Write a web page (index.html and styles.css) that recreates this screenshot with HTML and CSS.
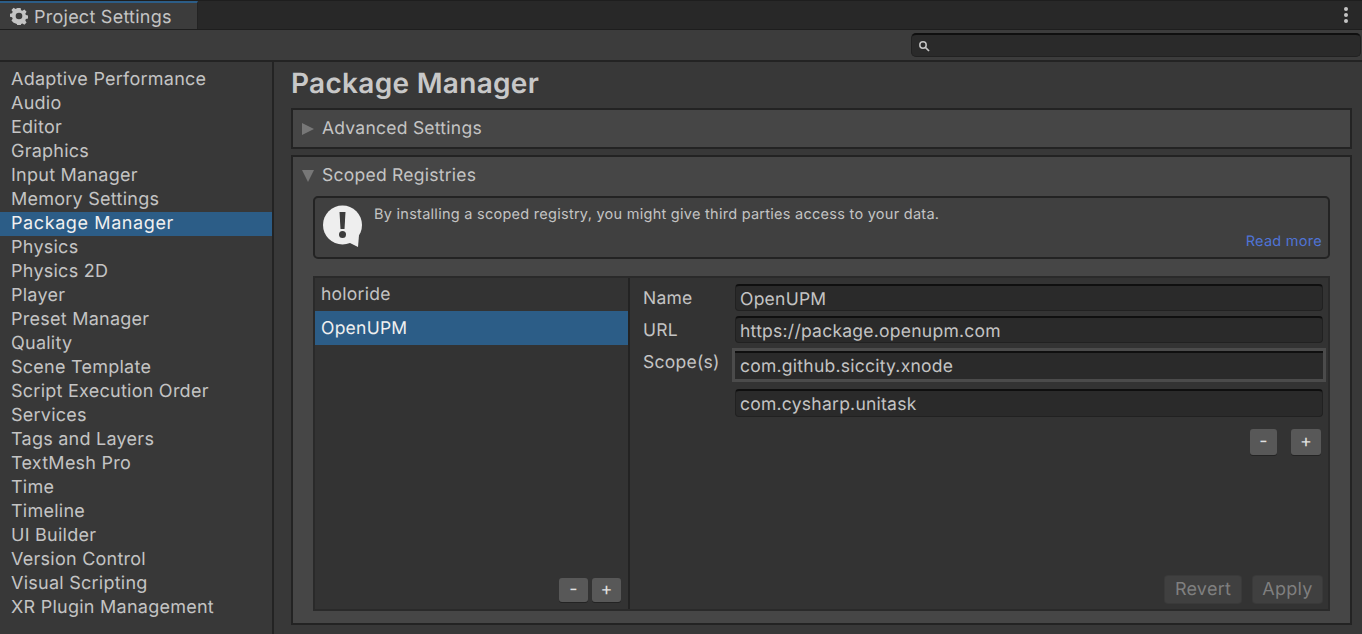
FILE: index.html
```html
<!DOCTYPE html>
<html lang="en">
<head>
  <meta charset="UTF-8" />
  <title>Project Settings</title>
  <link rel="stylesheet" href="styles.css">
</head>
<body>
  <div class="tabbar">
    <div class="tab">
      <svg class="gear" width="18" height="18" viewBox="0 0 20 20">
        <path fill="#c4c4c4" fill-rule="evenodd" d="M8.2 1h3.6l.5 2.5 1.5.7 2.2-1.4 2.4 2.5-1.4 2.1.7 1.6 2.3.5v3.4l-2.4.5-.6 1.6 1.4 2.1-2.4 2.5-2.2-1.4-1.5.7-.5 2.5H8.2l-.5-2.5-1.5-.7L4 17.6l-2.4-2.5L3 13l-.7-1.6-2.3-.5V7.5l2.3-.5L3 5.4 1.6 3.3 4 .8l2.2 1.4 1.5-.7zM10 6.3a3.7 3.7 0 1 0 0 7.4 3.7 3.7 0 0 0 0-7.4z"/>
      </svg>
      <span class="tab-title">Project Settings</span>
    </div>
    <div class="tab-menu"><i></i><i></i><i></i></div>
  </div>

  <div class="toolbar">
    <div class="search">
      <svg width="12" height="12" viewBox="0 0 12 12">
        <circle cx="5" cy="5" r="3.2" fill="none" stroke="#c4c4c4" stroke-width="1.5"/>
        <path d="M7.5 7.5L11 11" stroke="#c4c4c4" stroke-width="1.7"/>
      </svg>
    </div>
  </div>

  <div class="layout">
    <ul class="sidebar">
      <li>Adaptive Performance</li>
      <li>Audio</li>
      <li>Editor</li>
      <li>Graphics</li>
      <li>Input Manager</li>
      <li>Memory Settings</li>
      <li class="active">Package Manager</li>
      <li>Physics</li>
      <li>Physics 2D</li>
      <li>Player</li>
      <li>Preset Manager</li>
      <li>Quality</li>
      <li>Scene Template</li>
      <li>Script Execution Order</li>
      <li>Services</li>
      <li>Tags and Layers</li>
      <li>TextMesh Pro</li>
      <li>Time</li>
      <li>Timeline</li>
      <li>UI Builder</li>
      <li>Version Control</li>
      <li>Visual Scripting</li>
      <li>XR Plugin Management</li>
    </ul>

    <div class="content">
      <h1>Package Manager</h1>

      <div class="foldout closed">
        <div class="foldout-head"><span class="arrow-right"></span>Advanced Settings</div>
      </div>

      <div class="foldout open">
        <div class="foldout-head"><span class="arrow-down"></span>Scoped Registries</div>

        <div class="notice">
          <svg class="notice-icon" width="42" height="44" viewBox="0 0 42 44">
            <circle cx="21.5" cy="20" r="19.5" fill="#eeeeee"/>
            <path fill="#eeeeee" d="M27 37L38 30L37 42z"/>
            <path fill="#3c3c3c" d="M18.5 7h6l-1 17h-4z"/>
            <circle cx="21.5" cy="29.5" r="3.5" fill="#3c3c3c"/>
          </svg>
          <div class="notice-text">By installing a scoped registry, you might give third parties access to your data.</div>
          <a class="notice-link">Read more</a>
        </div>

        <div class="registries">
          <div class="reg-list">
            <div class="reg-row">holoride</div>
            <div class="reg-row selected">OpenUPM</div>
            <div class="reg-actions">
              <button class="mini">-</button>
              <button class="mini">+</button>
            </div>
          </div>

          <div class="reg-detail">
            <div class="field">
              <label>Name</label>
              <div class="input">OpenUPM</div>
            </div>
            <div class="field spaced">
              <label>URL</label>
              <div class="input">https://package.openupm.com</div>
            </div>
            <div class="field spaced scope-field">
              <label>Scope(s)</label>
              <div class="input focused">com.github.siccity.xnode</div>
            </div>
            <div class="field scope-next">
              <label></label>
              <div class="input">com.cysharp.unitask</div>
            </div>
            <div class="scope-actions">
              <button class="mini wide-minus">-</button>
              <button class="mini wide-plus">+</button>
            </div>
            <div class="form-actions">
              <button class="disabled revert">Revert</button>
              <button class="disabled">Apply</button>
            </div>
          </div>
        </div>
      </div>
    </div>
  </div>
</body>
</html>
```

FILE: styles.css
```css
* {
  box-sizing: border-box;
}

html, body {
  margin: 0;
  height: 100%;
  overflow: hidden;
}

body {
  font-family: Inter, "Liberation Sans", sans-serif;
  font-size: 18px;
  letter-spacing: 0.25px;
  text-rendering: geometricPrecision;
  color: #c4c4c4;
  background-color: #383838;
  display: flex;
  flex-direction: column;
}

.tabbar {
  height: 30px;
  flex: none;
  background-color: #282828;
  border-top: 1px solid #1e1e1e;
  border-bottom: 1px solid #1e1e1e;
  display: flex;
  justify-content: space-between;
}

.tab {
  width: 198px;
  background-color: #3c3c3c;
  border-top: 2px solid #2c5d87;
  border-right: 1px solid #232323;
  padding-left: 10px;
  display: flex;
  align-items: center;
  gap: 6px;
}

.tab-title {
  padding-top: 2px;
}

.tab-menu {
  width: 32px;
  padding-right: 1px;
  display: flex;
  flex-direction: column;
  align-items: center;
  justify-content: center;
  gap: 2px;
}

.tab-menu i {
  width: 4px;
  height: 4px;
  border-radius: 2px;
  background-color: #c4c4c4;
}

.toolbar {
  height: 32px;
  flex: none;
  background-color: #3c3c3c;
  border-bottom: 2px solid #232323;
  padding: 3px 1px 0 911px;
}

.search {
  height: 24px;
  background-color: #2a2a2a;
  border: 1px solid #212121;
  border-top: 2px solid #0f0f0f;
  border-radius: 5px;
  padding-left: 6px;
  display: flex;
  align-items: center;
}

.layout {
  flex: 1;
  display: flex;
  min-height: 0;
}

.sidebar {
  width: 274px;
  flex: none;
  margin: 0;
  padding: 6px 0 0;
  list-style: none;
  border-right: 2px solid #232323;
}

.sidebar li {
  height: 24px;
  line-height: 24px;
  padding-left: 11px;
}

.sidebar li.active {
  background-color: #2c5d87;
  color: #f0f0f0;
  letter-spacing: 0.6px;
}

.content {
  flex: 1;
  padding: 0 10px 0 17px;
}

h1 {
  margin: 0;
  height: 46px;
  line-height: 42px;
  font-size: 28px;
  font-weight: 600;
  letter-spacing: 0.3px;
  color: #c8c8c8;
}

.foldout {
  background-color: #464646;
  border: 2px solid #232323;
  font-size: 17.5px;
}

.foldout.closed {
  height: 41px;
  margin-bottom: 6px;
}

.foldout.open {
  height: 470px;
}

.foldout-head {
  height: 37px;
  padding-left: 9px;
  display: flex;
  align-items: center;
  gap: 8px;
}

.arrow-right {
  width: 0;
  height: 0;
  border-left: 12px solid #777777;
  border-top: 6.5px solid transparent;
  border-bottom: 6.5px solid transparent;
}

.arrow-down {
  width: 0;
  height: 0;
  border-top: 12px solid #777777;
  border-left: 6.5px solid transparent;
  border-right: 6.5px solid transparent;
}

.notice {
  position: relative;
  margin: 2px 20px 0;
  height: 63px;
  background-color: #404040;
  border: 2px solid #232323;
  border-radius: 5px;
  padding: 8px 0 0 59px;
  font-size: 14.5px;
  letter-spacing: 0.27px;
}

.notice-icon {
  position: absolute;
  left: 6px;
  top: 7px;
}

.notice-link {
  position: absolute;
  right: 6px;
  bottom: 7px;
  color: #4f74d6;
}

.registries {
  margin: 17px 20px 0;
  height: 335px;
  background-color: #333333;
  border: 2px solid #2a2a2a;
  font-size: 17.5px;
  display: flex;
}

.reg-list {
  width: 315px;
  flex: none;
  border-right: 2px solid #232323;
  display: flex;
  flex-direction: column;
}

.reg-row {
  height: 33px;
  line-height: 34px;
  padding-left: 6px;
}

.reg-row.selected {
  height: 34px;
  line-height: 36px;
  background-color: #2c5d87;
  color: #f0f0f0;
}

.reg-actions {
  margin-top: auto;
  padding: 0 7px 7px 0;
  display: flex;
  justify-content: flex-end;
  gap: 4px;
}

button {
  font-family: inherit;
  letter-spacing: inherit;
  text-rendering: inherit;
  padding: 0;
  border: 0;
}

.mini {
  width: 29px;
  height: 24px;
  border-radius: 3px;
  background-color: #585858;
  box-shadow: 0 1px 0 #232323;
  color: #e0e0e0;
  font-size: 18px;
  line-height: 22px;
}

.reg-detail {
  flex: 1;
  padding: 6px 5px 6px 13px;
  display: flex;
  flex-direction: column;
}

.field {
  height: 27px;
  flex: none;
  display: flex;
}

.field label {
  width: 92px;
  flex: none;
  line-height: 29px;
}

.field.spaced {
  margin-top: 5px;
}

.field.scope-field {
  height: 34px;
}

.field.scope-next {
  height: 28px;
  margin-top: 7px;
}

.input {
  flex: 1;
  line-height: 27px;
  padding-left: 4px;
  background-color: #2a2a2a;
  border: 1px solid #212121;
  border-top: 2px solid #0f0f0f;
  border-radius: 4px;
}

.input.focused {
  line-height: 31px;
  margin: 0 -3px;
  padding-left: 5px;
  border: 3px solid #4b4b4b;
  border-radius: 0;
  box-shadow: inset 0 2px 0 #0f0f0f;
}

.scope-actions {
  margin: 12px 2px 0 0;
  display: flex;
  justify-content: flex-end;
  gap: 14px;
}

.wide-minus {
  width: 27px;
  height: 26px;
}

.wide-plus {
  width: 30px;
  height: 26px;
}

.form-actions {
  margin: auto 1px 0 0;
  display: flex;
  justify-content: flex-end;
  gap: 12px;
}

.disabled {
  height: 27px;
  width: 69px;
  border-radius: 3px;
  background-color: #404040;
  box-shadow: 0 0 0 1px #3a3a3a;
  color: #7f7f7f;
  font-size: 18px;
}

.revert {
  width: 76px;
}
```
